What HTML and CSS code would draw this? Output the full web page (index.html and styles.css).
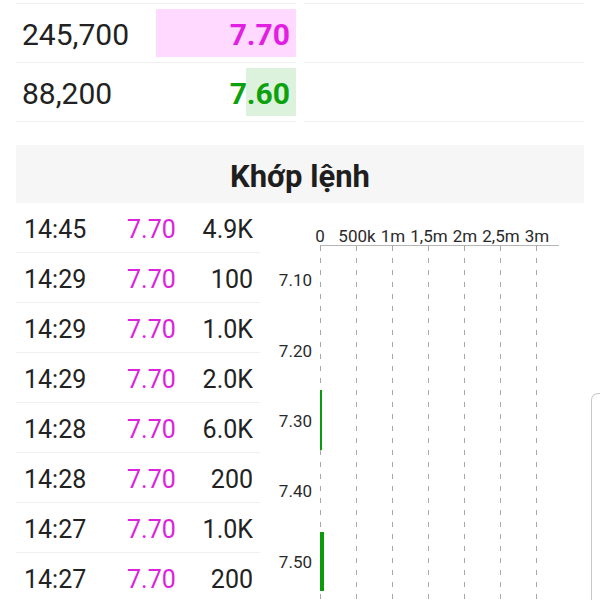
FILE: index.html
```html
<!DOCTYPE html>
<html>
<head>
<meta charset="utf-8">
<link rel="stylesheet" href="styles.css">
</head>
<body>
<div class="page">
  <div class="book">
    <div class="book-row">
      <div class="book-cell">
        <span class="vol">245,700</span>
        <span class="price up"><span class="bar pink" style="width:100%"></span><b>7.70</b></span>
      </div>
      <div class="book-cell"></div>
    </div>
    <div class="book-row">
      <div class="book-cell">
        <span class="vol">88,200</span>
        <span class="price down"><span class="bar green" style="width:36%"></span><b>7.60</b></span>
      </div>
      <div class="book-cell"></div>
    </div>
  </div>

  <div class="section-title">Khớp lệnh</div>

  <div class="match">
    <div class="trades">
      <div class="trade"><span class="t">14:45</span><span class="p">7.70</span><span class="q">4.9K</span></div>
      <div class="trade"><span class="t">14:29</span><span class="p">7.70</span><span class="q">100</span></div>
      <div class="trade"><span class="t">14:29</span><span class="p">7.70</span><span class="q">1.0K</span></div>
      <div class="trade"><span class="t">14:29</span><span class="p">7.70</span><span class="q">2.0K</span></div>
      <div class="trade"><span class="t">14:28</span><span class="p">7.70</span><span class="q">6.0K</span></div>
      <div class="trade"><span class="t">14:28</span><span class="p">7.70</span><span class="q">200</span></div>
      <div class="trade"><span class="t">14:27</span><span class="p">7.70</span><span class="q">1.0K</span></div>
      <div class="trade"><span class="t">14:27</span><span class="p">7.70</span><span class="q">200</span></div>
    </div>
    <svg class="chart" width="324" height="400" viewBox="0 0 324 400">
      <g class="xl">
        <text x="60" y="39">0</text>
        <text x="97" y="39">500k</text>
        <text x="133" y="39">1m</text>
        <text x="169" y="39">1,5m</text>
        <text x="205" y="39">2m</text>
        <text x="241" y="39">2,5m</text>
        <text x="277" y="39">3m</text>
      </g>
      <line class="axis" x1="60" y1="42.5" x2="299" y2="42.5"/>
      <g class="grid">
        <line x1="60.5" y1="43" x2="60.5" y2="400"/>
        <line x1="96.5" y1="43" x2="96.5" y2="400"/>
        <line x1="132.5" y1="43" x2="132.5" y2="400"/>
        <line x1="168.5" y1="43" x2="168.5" y2="400"/>
        <line x1="204.5" y1="43" x2="204.5" y2="400"/>
        <line x1="240.5" y1="43" x2="240.5" y2="400"/>
        <line x1="276.5" y1="43" x2="276.5" y2="400"/>
      </g>
      <g class="yl">
        <text x="52" y="83">7.10</text>
        <text x="52" y="154">7.20</text>
        <text x="52" y="224">7.30</text>
        <text x="52" y="294">7.40</text>
        <text x="52" y="365">7.50</text>
      </g>
      <rect class="vbar" x="60" y="187" width="2" height="60"/>
      <rect class="vbar" x="60" y="329" width="4" height="59"/>
    </svg>
  </div>
  <div class="edge"></div>
</div>
</body>
</html>
```

FILE: styles.css
```css
html, body {
  margin: 0;
  padding: 0;
  background: #fff;
}
body {
  font-family: Roboto, "Noto Sans", "Liberation Sans", sans-serif;
  color: #222;
  overflow: hidden;
}
.page {
  position: relative;
  width: 600px;
  height: 600px;
  padding: 3px 16px 0;
  box-sizing: border-box;
}
.book-row {
  display: flex;
  gap: 8px;
}
.book-cell {
  flex: 1;
  height: 58px;
  border-top: 1px solid #efefef;
  display: flex;
  align-items: center;
  justify-content: space-between;
}
.book-row:last-child .book-cell {
  border-bottom: 1px solid #efefef;
}
.vol {
  font-size: 30px;
  padding-left: 6px;
  padding-top: 2px;
}
.price {
  position: relative;
  width: 140px;
  height: 48px;
  display: flex;
  align-items: center;
  justify-content: flex-end;
  font-size: 30px;
}
.price b {
  position: relative;
  padding-right: 6px;
  padding-top: 2px;
  font-weight: 700;
}
.bar {
  position: absolute;
  top: 0;
  right: 0;
  bottom: 0;
}
.bar.pink { background: #ffd9ff; }
.bar.green { background: #ddf2dd; }
.up { color: #e31ee3; }
.down { color: #0ea10e; }

.section-title {
  margin-top: 23px;
  height: 58px;
  padding-top: 5px;
  box-sizing: border-box;
  background: #f6f6f6;
  display: flex;
  align-items: center;
  justify-content: center;
  font-size: 31px;
  font-weight: 700;
  color: #1e1e1e;
}
.match {
  display: flex;
}
.trades {
  width: 244px;
  flex: none;
}
.trade {
  height: 49px;
  padding-top: 3px;
  box-sizing: content-box;
  height: 46px;
  border-bottom: 1px solid #f0f0f0;
  display: flex;
  align-items: center;
  font-size: 25px;
}
.trade .t {
  width: 103px;
  padding-left: 8px;
}
.trade .p {
  width: 60px;
  color: #dc22dc;
}
.trade .q {
  flex: 1;
  text-align: right;
  padding-right: 7px;
}
.chart {
  display: block;
  flex: none;
}
.chart text {
  font-family: Roboto, "Noto Sans", "Liberation Sans", sans-serif;
  font-size: 17px;
  fill: #2a2a2a;
}
.xl text { text-anchor: middle; }
.yl text { text-anchor: end; }
.axis {
  stroke: #b5b5b5;
  stroke-width: 1;
}
.grid line {
  stroke: #a8a8a8;
  stroke-width: 1;
  stroke-dasharray: 5 7;
}
.vbar { fill: #0d9a0d; }
.edge {
  position: absolute;
  left: 591px;
  top: 393px;
  width: 20px;
  height: 220px;
  border-left: 1px solid #c8c8c8;
  border-top: 1px solid #c8c8c8;
  border-top-left-radius: 7px;
}
```
